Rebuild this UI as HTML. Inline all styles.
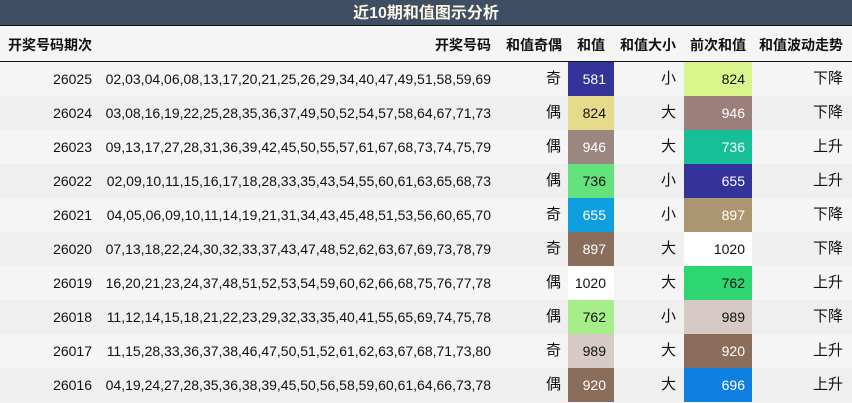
<!DOCTYPE html><html><head><meta charset="utf-8"><style>
body{margin:0;width:852px;height:403px;overflow:hidden;background:#f5f5f5;font-family:"Liberation Sans","Noto Sans CJK SC",sans-serif;font-size:14px;color:#111}
.t{position:absolute;left:0;top:0;width:852px;height:25px;background:#3e4e63;border-bottom:1.5px solid #111;color:#fbf6e6;font-weight:bold;font-size:16px;text-align:center;line-height:27px}
.h{position:absolute;top:26px;left:0;width:852px;height:35px;background:#f5f5f5;border-bottom:1.5px solid #111;font-weight:bold}
.r{position:absolute;left:0;width:852px;height:34px}
.c{position:absolute;top:0;height:100%;line-height:34px;text-align:right}
.h .c{line-height:38px}
</style></head><body>
<div class="t">近10期和值图示分析</div>
<div class="h">
<div class="c" style="left:8px;text-align:left">开奖号码期次</div>
<div class="c" style="right:361px">开奖号码</div>
<div class="c" style="right:290px">和值奇偶</div>
<div class="c" style="left:568px;width:46px;text-align:center">和值</div>
<div class="c" style="right:176px">和值大小</div>
<div class="c" style="left:684px;width:68px;text-align:center">前次和值</div>
<div class="c" style="right:9px">和值波动走势</div>
</div>
<div id="rows"></div>
<script>
var d=[["26025","02,03,04,06,08,13,17,20,21,25,26,29,34,40,47,49,51,58,59,69","奇","581","#343399","#fff","小","824","#d9f58b","#111","下降"],
["26024","03,08,16,19,22,25,28,35,36,37,49,50,52,54,57,58,64,67,71,73","偶","824","#e6db8a","#111","大","946","#9c7f7a","#fff","下降"],
["26023","09,13,17,27,28,31,36,39,42,45,50,55,57,61,67,68,73,74,75,79","偶","946","#9c8680","#fff","大","736","#17bf98","#fff","上升"],
["26022","02,09,10,11,15,16,17,18,28,33,35,43,54,55,60,61,63,65,68,73","偶","736","#63e27d","#111","小","655","#343399","#fff","上升"],
["26021","04,05,06,09,10,11,14,19,21,31,34,43,45,48,51,53,56,60,65,70","奇","655","#0f9fe0","#fff","小","897","#ab9670","#fff","下降"],
["26020","07,13,18,22,24,30,32,33,37,43,47,48,52,62,63,67,69,73,78,79","奇","897","#8b6d5c","#fff","大","1020","#fff","#111","下降"],
["26019","16,20,21,23,24,37,48,51,52,53,54,59,60,62,66,68,75,76,77,78","偶","1020","#fff","#111","大","762","#2ed672","#111","上升"],
["26018","11,12,14,15,18,21,22,23,29,32,33,35,40,41,55,65,69,74,75,78","偶","762","#a6ee89","#111","小","989","#d6c9c6","#111","下降"],
["26017","11,15,28,33,36,37,38,46,47,50,51,52,61,62,63,67,68,71,73,80","奇","989","#d6c9c6","#111","大","920","#8b6d5c","#fff","上升"],
["26016","04,19,24,27,28,35,36,38,39,45,50,56,58,59,60,61,64,66,73,78","偶","920","#8b6d5c","#fff","大","696","#0f7fe0","#fff","上升"]];
var h="";d.forEach(function(x,i){h+='<div class="r" style="top:'+(62+i*34)+'px;background:'+(i%2?'#efefef':'#f5f5f5')+'">'+
'<div class="c" style="right:760px">'+x[0]+'</div>'+
'<div class="c" style="right:361px">'+x[1]+'</div>'+
'<div class="c" style="right:291px;font-size:15px">'+x[2]+'</div>'+
'<div class="c" style="left:568px;width:38px;padding-right:8px;background:'+x[4]+';color:'+x[5]+'">'+x[3]+'</div>'+
'<div class="c" style="right:176px;font-size:15px">'+x[6]+'</div>'+
'<div class="c" style="left:684px;width:61px;padding-right:7px;background:'+x[8]+';color:'+x[9]+'">'+x[7]+'</div>'+
'<div class="c" style="right:9px;font-size:15px">'+x[10]+'</div></div>';});
document.getElementById("rows").innerHTML=h;
</script>
</body></html>
